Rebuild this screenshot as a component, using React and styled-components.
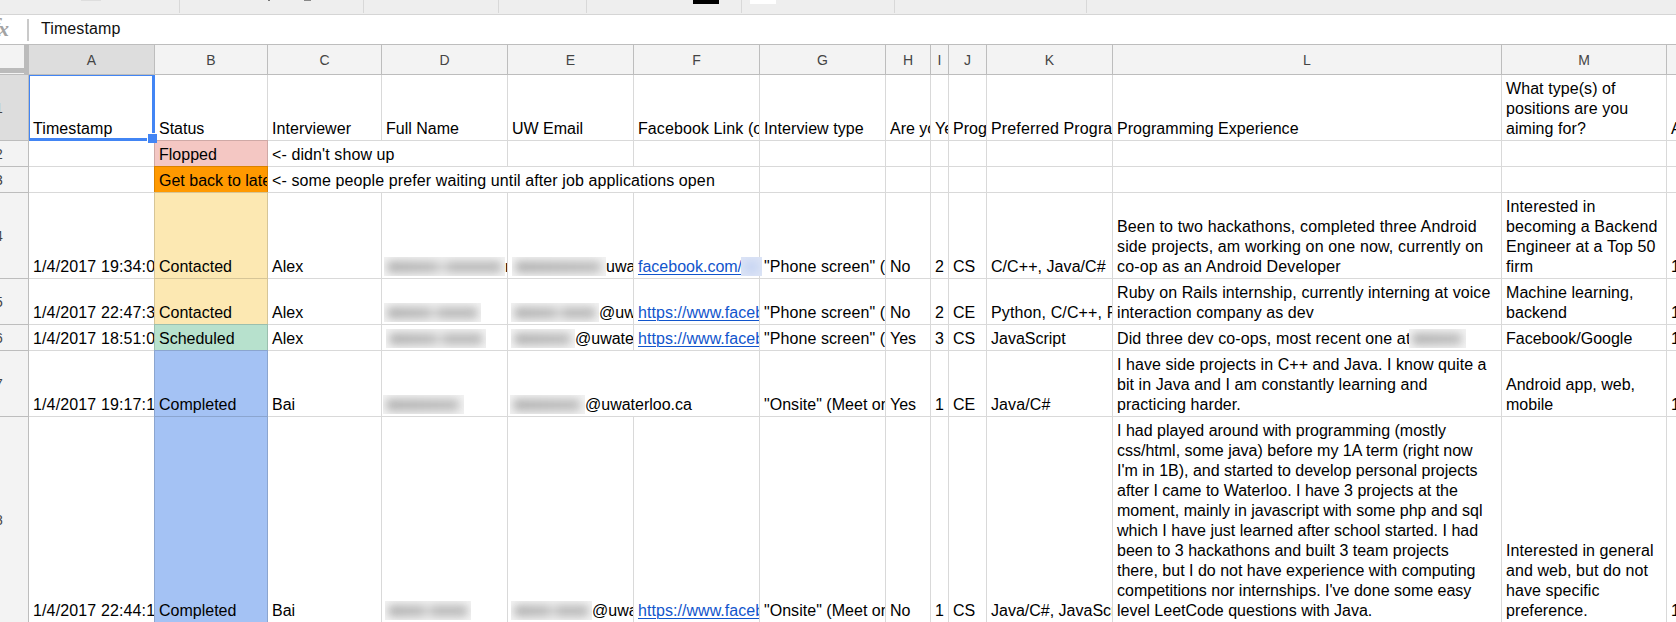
import React from "react";
import styled, { createGlobalStyle, css } from "styled-components";

const GRID = "#d9d9d9";
const HEAD_LINE = "#bdbdbd";
const BLUE = "#4285f4";

const GlobalStyle = createGlobalStyle`
  * { box-sizing: border-box; }
  html, body { margin: 0; background: #fff; overflow: hidden; }
  body { font-family: "Liberation Sans", Arial, sans-serif; color: #000; }
`;

const Page = styled.div`
  width: 1676px;
  height: 622px;
  overflow: hidden;
  display: flex;
  flex-direction: column;
  background: #fff;
`;

const Toolbar = styled.div`
  display: flex;
  flex: none;
  height: 15px;
  background: #eee;
  border-bottom: 1px solid #d5d5d5;
  padding-bottom: 1px;
`;

const ToolGroup = styled.div`
  display: flex;
  align-items: flex-start;
  flex: ${(p) => (p.$width ? `0 0 ${p.$width}px` : "1")};
  border-right: ${(p) => (p.$width ? "1px solid #d8d8d8" : "0")};
`;

const Chip = styled.span`
  width: ${(p) => p.$width}px;
  height: ${(p) => p.$height}px;
  margin-left: ${(p) => p.$gap}px;
  background: ${(p) => p.$color};
`;

const FormulaBar = styled.div`
  display: flex;
  align-items: center;
  flex: none;
  height: 30px;
  border-bottom: 1px solid ${HEAD_LINE};
`;

const FxLabel = styled.span`
  width: 27px;
  margin-top: -7px;
  overflow: hidden;
  white-space: nowrap;
  font: italic bold 24px/28px "Liberation Serif", serif;
  color: #a3a3a3;
  span { display: inline-block; margin-left: -8px; }
  i { display: inline-block; font-size: 22px; transform: translate(-2px, 2px); }
`;

const FormulaDivider = styled.span`
  width: 2px;
  height: 22px;
  background: #cacaca;
`;

const FormulaText = styled.span`
  margin: -2px 0 0 12px;
  font-size: 16px;
  letter-spacing: 0.1px;
  color: #111;
`;

const Row = styled.div`
  display: grid;
  flex: none;
  grid-template-columns: 29px 126px 113px 114px 126px 126px 126px 126px 45px 18px 38px 126px 389px 165px 120px;
  grid-template-rows: ${(p) => p.$height}px;
`;

const HeadCell = styled.div`
  display: flex;
  align-items: center;
  justify-content: center;
  min-width: 0;
  font-size: 14px;
  color: #444;
  background: ${(p) => (p.$active ? "#ddd" : "#f3f3f3")};
  border-right: 1px solid ${HEAD_LINE};
  border-bottom: 1px solid ${HEAD_LINE};
`;

const Corner = styled.div`
  background: #f3f3f3;
  border-right: 5px solid #bbb;
  border-bottom: 1px solid ${HEAD_LINE};
  display: flex;
  align-items: flex-end;
  padding-bottom: 1px;
  &::after { content: ""; flex: 1; height: 5px; background: #bbb; }
`;

const RowNumber = styled(HeadCell)`
  justify-content: flex-start;
  overflow: hidden;
  span { margin-left: -5px; }
`;

const Cell = styled.div`
  position: relative;
  display: flex;
  align-items: flex-end;
  justify-content: ${(p) => (p.$right ? "flex-end" : "flex-start")};
  grid-column: span ${(p) => p.$span || 1};
  min-width: 0;
  padding: 0 4px 1px;
  overflow: ${(p) => (p.$selected || p.$spill ? "visible" : "hidden")};
  border-right: 1px solid ${GRID};
  border-bottom: 1px solid ${GRID};
  font-size: 16px;
  line-height: 20px;
  letter-spacing: ${(p) => p.$track || 0}px;
  white-space: pre;
  ${(p) =>
    p.$fill &&
    css`
      margin: -1px 0 0 -1px;
      border: 1px solid rgba(0, 0, 0, 0.15);
      background: ${p.$fill};
    `}
`;

const SelectionBox = styled.div`
  position: absolute;
  z-index: 2;
  inset: 0 -1px -1px 0;
  border: solid ${BLUE};
  border-width: 1px 3px 3px 1px;
  &::after {
    content: "";
    position: absolute;
    right: -5px;
    bottom: -5px;
    width: 9px;
    height: 9px;
    background: ${BLUE};
    border: solid #fff;
    border-width: 1px 0 0 1px;
  }
`;

const Link = styled.span`
  color: #1155cc;
  text-decoration: underline;
  text-decoration-thickness: 1px;
  text-underline-offset: 2px;
`;

const Masked = styled.span`
  position: relative;
  display: inline-block;
  vertical-align: top;
  z-index: ${(p) => (p.$blue ? 1 : 0)};
  width: ${(p) => p.$width}px;
  height: 19px;
  margin-left: ${(p) => p.$shift || 0}px;
  margin-right: ${(p) => (p.$blue ? -6 : 0)}px;
  overflow: hidden;
  background: ${(p) => (p.$blue ? "#dce4f6" : "#f3f3f3")};
  &::before {
    content: "";
    position: absolute;
    inset: 4px 3px 3px;
    border-radius: 5px;
    filter: blur(4px);
    background: ${(p) =>
      p.$blue
        ? "#c6d4f2"
        : `linear-gradient(90deg, #b4b4b4, #bebebe ${(p.$gap || 100) - 8}%, #dcdcdc ${p.$gap || 100}%, #bcbcbc ${(p.$gap || 100) + 8}%)`};
  }
`;

const LETTERS = "ABCDEFGHIJKLM".split("");
const TOOL_WIDTHS = [180, 184, 135, 88, 155, 153, 192, 0];
const TOOL_CHIPS = [
  [{ $gap: 81, $width: 20, $height: 1, $color: "#dedede" }],
  [
    { $gap: 88, $width: 2, $height: 1, $color: "#777" },
    { $gap: 34, $width: 7, $height: 1, $color: "#888" },
  ],
  [],
  [],
  [{ $gap: 106, $width: 26, $height: 4, $color: "#000" }],
  [{ $gap: 8, $width: 26, $height: 4, $color: "#fff" }],
  [],
  [],
];

const YELLOW = "#fce8b2";
const STATUS_FILL = {
  Flopped: "#f4c7c3",
  "Get back to later": "#ff9900",
  Contacted: YELLOW,
  Scheduled: "#b7e1cd",
  Completed: "#a4c2f4",
};

const person = (width, shift, gap, tail) => (
  <span>
    <Masked $width={width} $shift={shift} $gap={gap} />
    {tail}
  </span>
);
const tracked = (track, text) => ({ track, text });
const phone = tracked(0.08, '"Phone screen" (online)');
const onsite = tracked(0.03, '"Onsite" (Meet on campus)');
const profile = tracked(0.05, <Link>https://www.facebook.com/</Link>);

const ROWS = [
  {
    height: 66,
    cells: [
      tracked(0.1, "Timestamp"), "Status", tracked(0.08, "Interviewer"), "Full Name", "UW Email",
      tracked(0.1, "Facebook Link (optional)"), tracked(0.08, "Interview type"), "Are you", "Year", "Program",
      tracked(0.14, "Preferred Programming"), tracked(0.05, "Programming Experience"),
      tracked(0.07, "What type(s) of\npositions are you\naiming for?"), "Anything",
    ],
  },
  { height: 26, cells: ["", "Flopped", { span: 2, track: 0.1, text: "<- didn't show up" }, "", "", "", "", "", "", "", "", "", ""] },
  {
    height: 26,
    cells: ["", "Get back to later", { span: 4, track: 0.105, text: "<- some people prefer waiting until after job applications open" }, "", "", "", "", "", "", "", ""],
  },
  {
    height: 86,
    cells: [
      tracked(0.13, "1/4/2017 19:34:00"), "Contacted", "Alex", person(121, -2, 48, "n"), person(94, 0, 0, "uwaterloo.ca"),
      { spill: true, text: <span><Link>facebook.com/</Link><Masked $blue $width={21} $shift={-1} /></span> },
      phone, "No", "2", "CS", tracked(0.06, "C/C++, Java/C#"),
      tracked(0.14, "Been to two hackathons, completed three Android\nside projects, am working on one now, currently on\nco-op as an Android Developer"),
      tracked(0.11, "Interested in\nbecoming a Backend\nEngineer at a Top 50\nfirm"), "1",
    ],
  },
  {
    height: 46,
    cells: [
      tracked(0.13, "1/4/2017 22:47:30"), "Contacted", "Alex", person(97, -2, 52), person(88, -1, 55, "@uwaterloo.ca"), profile,
      phone, "No", "2", "CE", tracked(0.12, "Python, C/C++, R"),
      tracked(0.08, "Ruby on Rails internship, currently interning at voice\ninteraction company as dev"),
      tracked(0.07, "Machine learning,\nbackend"), "1",
    ],
  },
  {
    height: 26,
    cells: [
      tracked(0.13, "1/4/2017 18:51:00"), "Scheduled", "Alex", person(100, 0, 54), person(64, -1, 0, "@uwaterloo.ca"), profile,
      phone, "Yes", "3", "CS", "JavaScript",
      tracked(0.11, <span>Did three dev co-ops, most recent one at<Masked $width={57} $shift={-1} /></span>),
      "Facebook/Google", "1",
    ],
  },
  {
    height: 66,
    cells: [
      tracked(0.13, "1/4/2017 19:17:10"), "Completed", "Bai", person(81, -3, 0),
      { span: 2, text: person(75, -2, 0, "@uwaterloo.ca") },
      onsite, "Yes", "1", "CE", tracked(0.1, "Java/C#"),
      tracked(0.06, "I have side projects in C++ and Java. I know quite a\nbit in Java and I am constantly learning and\npracticing harder."),
      "Android app, web,\nmobile", "1",
    ],
  },
  {
    height: 206,
    cells: [
      tracked(0.13, "1/4/2017 22:44:10"), "Completed", "Bai", person(86, -1, 50), person(81, -1, 52, "@uwaterloo.ca"), profile,
      onsite, "No", "1", "CS", "Java/C#, JavaScript",
      "I had played around with programming (mostly\ncss/html, some java) before my 1A term (right now\nI'm in 1B), and started to develop personal projects\nafter I came to Waterloo. I have 3 projects at the\nmoment, mainly in javascript with some php and sql\nwhich I have just learned after school started. I had\nbeen to 3 hackathons and built 3 team projects\nthere, but I do not have experience with computing\ncompetitions nor internships. I've done some easy\nlevel LeetCode questions with Java.",
      tracked(0.08, "Interested in general\nand web, but do not\nhave specific\npreference."), "1",
    ],
  },
];

function SheetRow({ row, number }) {
  return (
    <Row $height={row.height}>
      <RowNumber $active={number === 1}><span>{number}</span></RowNumber>
      {row.cells.map((value, i) => {
        const cell = value && value.text ? value : { text: value };
        const selected = number === 1 && i === 0;
        return (
          <Cell
            key={i}
            $span={cell.span}
            $spill={cell.spill}
            $track={cell.track}
            $selected={selected}
            $right={/^\d$/.test(cell.text) && i < 12}
            $fill={i === 1 ? STATUS_FILL[cell.text] : undefined}
          >
            {cell.text}
            {selected && <SelectionBox />}
          </Cell>
        );
      })}
    </Row>
  );
}

export default function App() {
  return (
    <Page>
      <GlobalStyle />
      <Toolbar>
        {TOOL_WIDTHS.map((w, i) => (
          <ToolGroup key={i} $width={w}>
            {TOOL_CHIPS[i].map((chip, j) => <Chip key={j} {...chip} />)}
          </ToolGroup>
        ))}
      </Toolbar>
      <FormulaBar>
        <FxLabel><span>f</span><i>x</i></FxLabel>
        <FormulaDivider />
        <FormulaText>Timestamp</FormulaText>
      </FormulaBar>
      <Row $height={30}>
        <Corner />
        {LETTERS.map((l) => <HeadCell key={l} $active={l === "A"}>{l}</HeadCell>)}
        <HeadCell />
      </Row>
      {ROWS.map((row, i) => <SheetRow key={i} row={row} number={i + 1} />)}
    </Page>
  );
}
